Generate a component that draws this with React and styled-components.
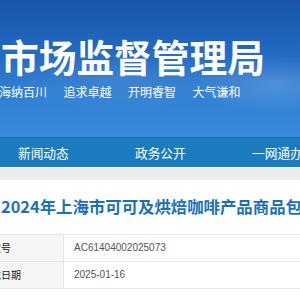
import styled, { createGlobalStyle } from "styled-components";

const GlobalStyle = createGlobalStyle`
  html, body {
    margin: 0;
    padding: 0;
    background: #ffffff;
    overflow: hidden;
  }
  body {
    font-family: "Noto Sans CJK SC", "Noto Sans", sans-serif;
  }
`;

const Page = styled.div`
  width: 300px;
  overflow: hidden;
`;

const Banner = styled.header`
  height: 137px;
  box-sizing: border-box;
  padding-top: 36px;
  background:
    radial-gradient(ellipse 90px 28px at 275px 84px, rgba(255, 255, 255, 0.16), transparent),
    radial-gradient(ellipse 120px 30px at 120px 80px, rgba(255, 255, 255, 0.08), transparent),
    linear-gradient(180deg, #1855ab 0%, #2268c0 35%, #3180d4 70%, #3a8bde 100%);
`;

const SiteName = styled.h1`
  margin: 0 0 0 1px;
  font-size: 37.7px;
  line-height: 40px;
  font-weight: 700;
  color: #ffffff;
  white-space: nowrap;
`;

const Slogan = styled.div`
  display: flex;
  gap: 16.5px;
  margin: 8px 0 0 -1px;
  font-size: 12px;
  line-height: 16px;
  color: #ffffff;
  white-space: nowrap;
`;

const Nav = styled.nav`
  display: flex;
  height: 30px;
  padding-left: 18px;
  background: #1b7bbf;
  border-top: 1px solid #1a6fae;
  box-sizing: border-box;
`;

const NavItem = styled.a`
  flex: 0 0 117px;
  font-size: 12.7px;
  line-height: 29px;
  color: #ffffff;
  white-space: nowrap;
`;

const Band = styled.div`
  height: 12px;
  background: #ececec;
  border-top: 1px solid #f7f7f7;
`;

const ArticleTitle = styled.h2`
  margin: 0;
  padding: 14px 0 0 1px;
  font-size: 16.4px;
  line-height: 24px;
  font-weight: 700;
  color: #1a70bd;
  white-space: nowrap;
`;

const InfoTable = styled.div`
  margin: 16px 0 0 -40px;
  border-top: 1px solid #e5e5e5;
`;

const Row = styled.div`
  display: flex;
  height: 26px;
  border-bottom: 1px solid #e5e5e5;
`;

const Label = styled.div`
  flex: 0 0 104px;
  padding-left: 21px;
  box-sizing: border-box;
  background: #f6f6f6;
  border-right: 1px solid #e5e5e5;
  font-size: 10px;
  line-height: 26px;
  color: #222222;
  white-space: nowrap;
`;

const Value = styled.div`
  padding-left: 10px;
  font-family: "Liberation Sans", "Noto Sans CJK SC", sans-serif;
  font-size: 10px;
  line-height: 26px;
  color: #555555;
  white-space: nowrap;
`;

const NextSection = styled.div`
  margin-top: 12px;
  border-top: 1px solid #e5e5e5;
  height: 20px;
`;

const navItems = ["新闻动态", "政务公开", "一网通办"];
const slogans = ["海纳百川", "追求卓越", "开明睿智", "大气谦和"];
const info = [
  { label: "索取号", value: "AC61404002025073" },
  { label: "生成日期", value: "2025-01-16" },
];

export default function App() {
  return (
    <Page>
      <GlobalStyle />
      <Banner>
        <SiteName>市场监督管理局</SiteName>
        <Slogan>
          {slogans.map((s) => (
            <span key={s}>{s}</span>
          ))}
        </Slogan>
      </Banner>
      <Nav>
        {navItems.map((n) => (
          <NavItem key={n}>{n}</NavItem>
        ))}
      </Nav>
      <Band />
      <ArticleTitle>2024年上海市可可及烘焙咖啡产品商品包装抽查结果</ArticleTitle>
      <InfoTable>
        {info.map((r) => (
          <Row key={r.label}>
            <Label>{r.label}</Label>
            <Value>{r.value}</Value>
          </Row>
        ))}
      </InfoTable>
      <NextSection />
    </Page>
  );
}
